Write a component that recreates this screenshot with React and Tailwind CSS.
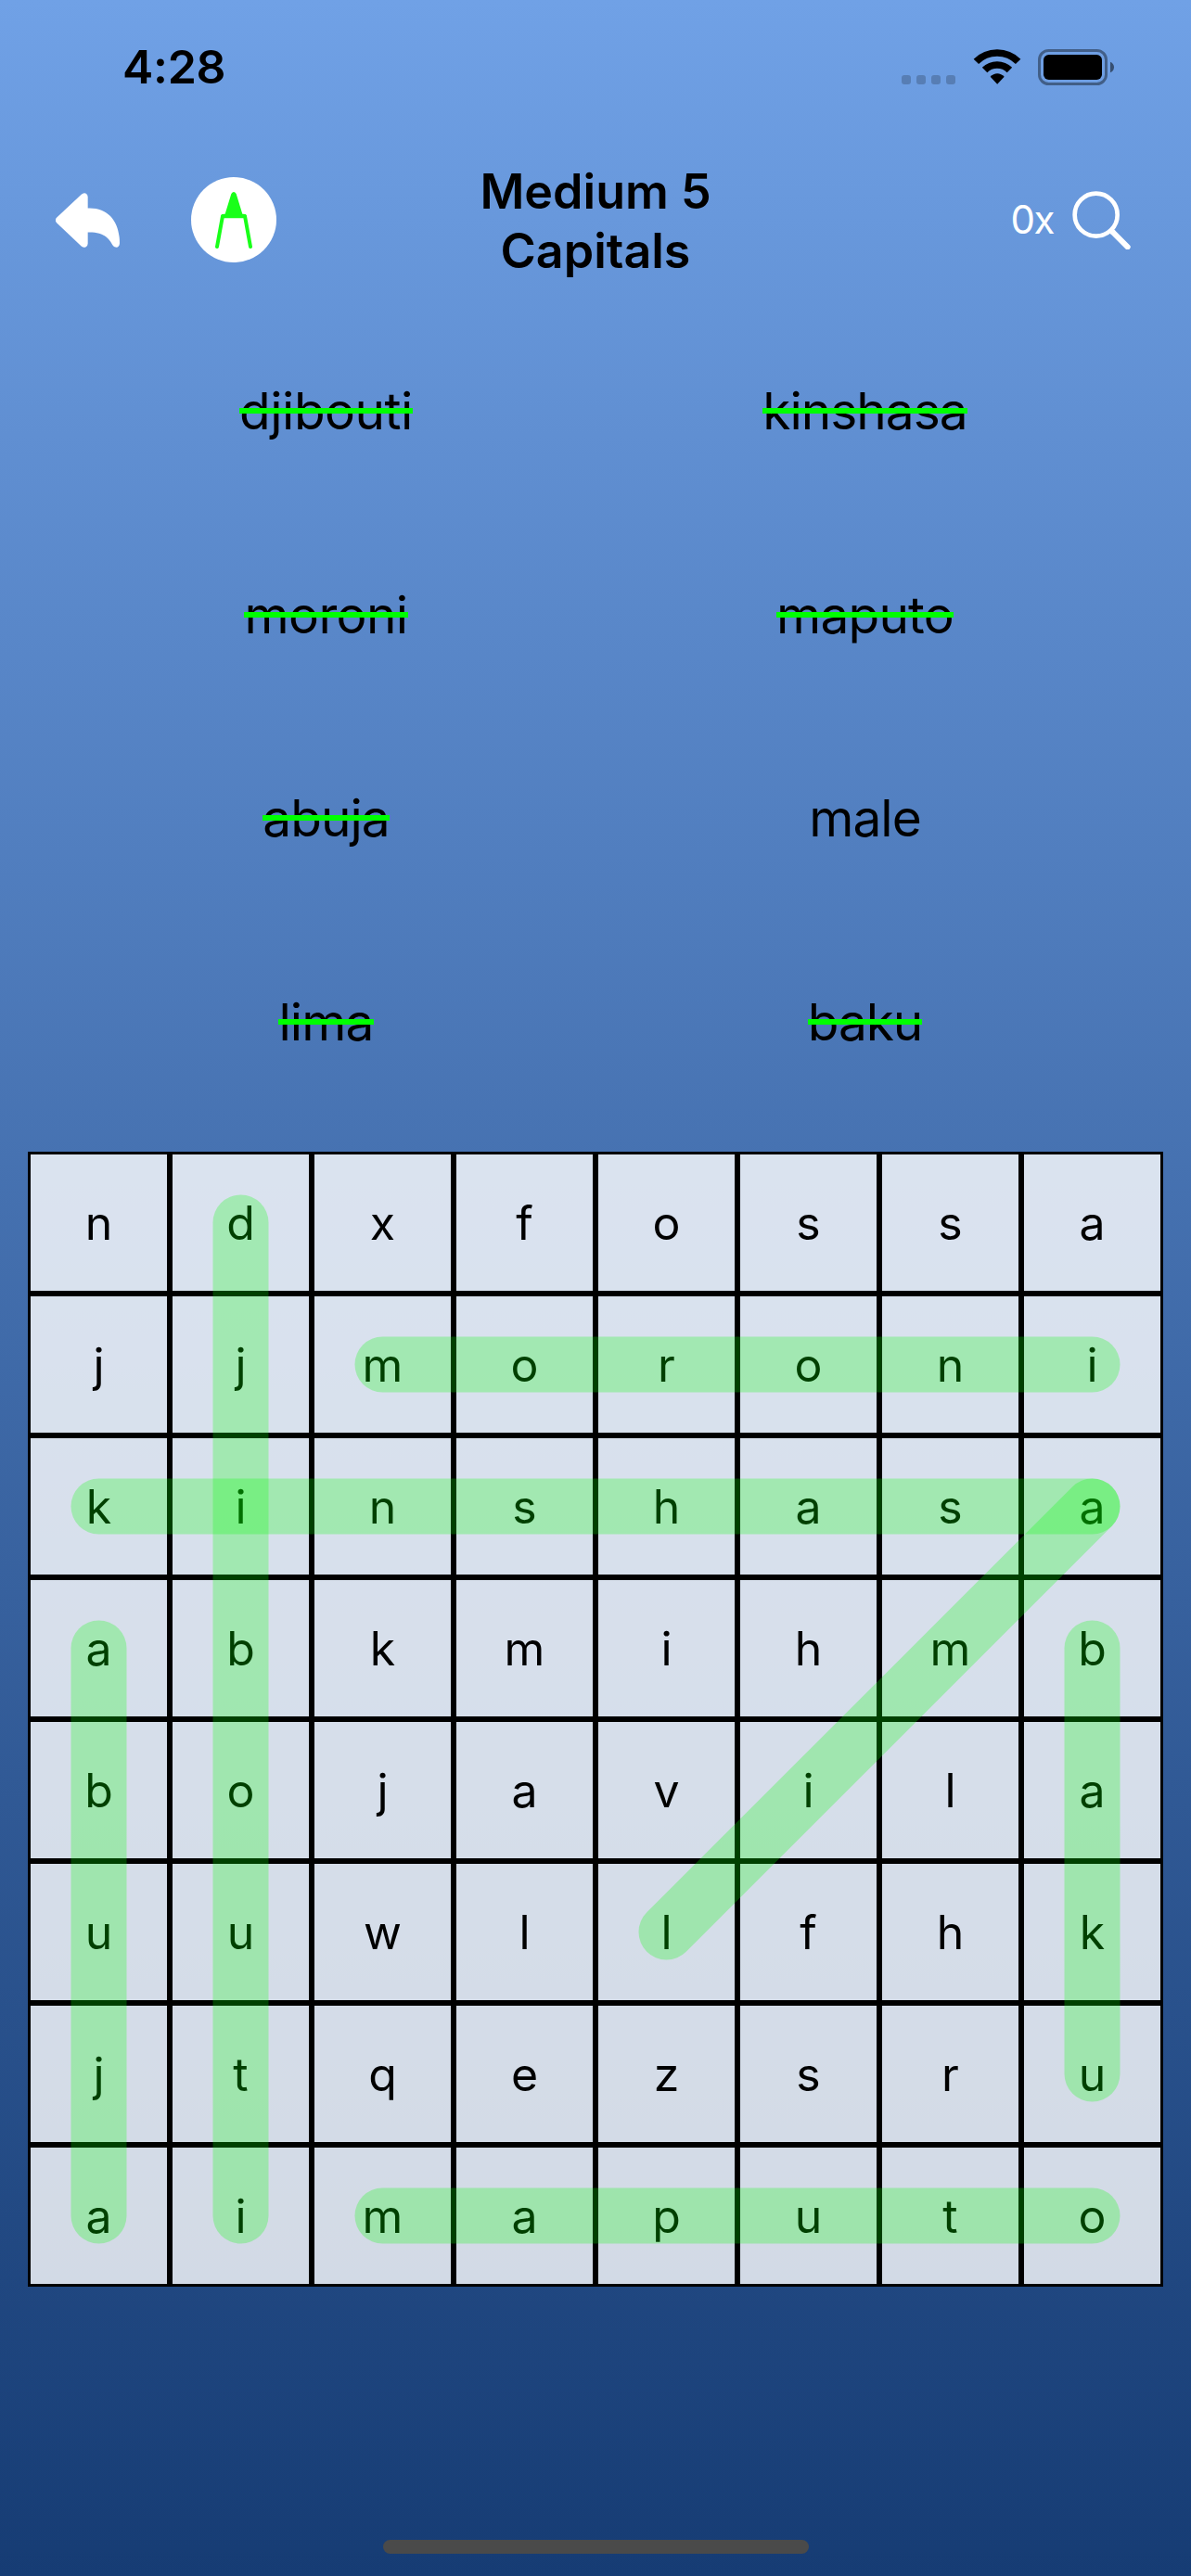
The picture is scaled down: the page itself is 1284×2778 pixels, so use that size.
const words = [
  { text: "djibouti", found: true, spacing: "tracking-[-0.5px]" },
  { text: "kinshasa", found: true, spacing: "tracking-[-1px]" },
  { text: "moroni", found: true, spacing: "tracking-[-0.6px]" },
  { text: "maputo", found: true, spacing: "tracking-[-0.8px]" },
  { text: "abuja", found: true, spacing: "tracking-[-1px]" },
  { text: "male", found: false, spacing: "tracking-[-1px]" },
  { text: "lima", found: true, spacing: "tracking-[-0.9px]" },
  { text: "baku", found: true, spacing: "tracking-[-1.1px]" },
];

const rows = [
  "ndxfossa",
  "jjmoroni",
  "kinshasa",
  "abkmihmb",
  "bojavila",
  "uuwllfhk",
  "jtqezsru",
  "aimaputo",
];

// Each highlight runs from one cell to another: [column, row, column, row].
const highlights = [
  [1, 0, 1, 7],
  [2, 1, 7, 1],
  [0, 2, 7, 2],
  [0, 3, 0, 7],
  [7, 3, 7, 6],
  [4, 5, 7, 2],
  [2, 7, 7, 7],
];

const CELL = 153;
const center = (index) => index * CELL + CELL / 2;

function StatusBar() {
  return (
    <div className="flex h-[141px] shrink-0 items-start justify-between pl-[132px] pr-[82px] pt-[42px]">
      <div className="text-[50px] leading-[61px] font-semibold tracking-[-0.3px]">4:28</div>
      <div className="flex items-start pt-[11px]">
        <div className="mt-[28px] flex gap-[6px]">
          {[0, 1, 2, 3].map((dot) => (
            <div key={dot} className="size-[10px] rounded-[3px] bg-black/20" />
          ))}
        </div>
        <svg className="ml-[19px] h-[38px] w-[52px]" viewBox="328 100 156 114" fill="none">
          <path d="M338.1 140.1A96 96 0 0 1 473.9 140.1M365.7 167.7A57 57 0 0 1 446.3 167.7" stroke="#000" strokeWidth="23" />
          <path d="M384 189C396 175 417 175 429 189L406.500 213Z" fill="#000" />
        </svg>
        <svg className="ml-[18px] h-[39px] w-[83px]" viewBox="540 98 249 117" fill="none">
          <rect x="544.5" y="102.500" width="216" height="108" rx="30" stroke="#000" strokeOpacity=".4" strokeWidth="9" />
          <rect x="558" y="116" width="189" height="81" rx="17" fill="#000" />
          <path d="M774 139C790 145 790 168 774 174Z" fill="#000" fillOpacity=".5" />
        </svg>
      </div>
    </div>
  );
}

function Header() {
  return (
    <header className="grid h-[192px] shrink-0 grid-cols-3 items-center px-[60px]">
      <div className="flex items-center gap-[77px]">
        <svg className="h-[59px] w-[69px]" viewBox="180 562.500 207 177" fill="#fff">
          <path d="M183 643L263 568Q270 561 277 564Q284 567 284 575V612C350 609 387 655 387 725Q386 738 376 739Q369 739 364 731C345 697 322 689 284 690V727Q284 735 277 738Q270 740 263 735L183 659Q176 651 183 643Z" />
        </svg>
        <div className="flex size-[92px] items-center justify-center rounded-full bg-white">
          <svg className="h-[61px] w-[40px]" viewBox="694 559 120 183" fill="none">
            <path d="M746 565Q754 553 762 565L782 630Q794 629 796 638L786 644H722L712 638Q714 629 726 630Z" fill="#19ff19" />
            <path d="M718 637L700 736M790 637L808 736" stroke="#19ff19" strokeWidth="12" strokeLinecap="round" />
          </svg>
        </div>
      </div>
      <h1 className="pt-[4px] text-center text-[52px] leading-[64px] font-semibold">
        Medium 5<br />Capitals
      </h1>
      <div className="mr-[5px] flex items-center justify-end gap-[20px] text-white">
        <span className="text-[42px] leading-[52px] tracking-[-1.5px]">0x</span>
        <svg className="h-[63px] w-[63px]" viewBox="647 554 189 189" fill="none" stroke="#fff">
          <circle cx="724" cy="631" r="69" strokeWidth="14" />
          <path d="M776 685L826 735" strokeWidth="18" strokeLinecap="round" />
          <path d="M772 681L780 689" strokeWidth="18" />
        </svg>
      </div>
    </header>
  );
}

function WordList() {
  return (
    <ul className="grid h-[879px] shrink-0 grid-cols-2 grid-rows-4 px-[61px]">
      {words.map(({ text, found, spacing }) => (
        <li key={text} className="flex items-center justify-center">
          <span className={`relative text-[55px] leading-[66px] ${spacing}`}>
            {text}
            {found && <span className="absolute inset-x-0 top-[30px] h-[6px] bg-[#00ff00]" />}
          </span>
        </li>
      ))}
    </ul>
  );
}

function Board() {
  return (
    <div className="relative mx-[30px] h-[1224px] w-[1224px] shrink-0">
      <div className="grid grid-cols-8">
        {rows.flatMap((row, y) =>
          [...row].map((letter, x) => (
            <div
              key={`${x}-${y}`}
              className="flex h-[153px] items-center justify-center border-3 border-black bg-white/80 bg-clip-padding text-[50px] leading-[60px]"
            >
              {letter}
            </div>
          ))
        )}
      </div>
      <svg className="pointer-events-none absolute inset-0" viewBox="0 0 1224 1224">
        {highlights.map(([x1, y1, x2, y2]) => (
          <line
            key={`${x1}${y1}${x2}${y2}`}
            x1={center(x1)}
            y1={center(y1)}
            x2={center(x2)}
            y2={center(y2)}
            stroke="#00ff00"
            strokeOpacity=".25"
            strokeWidth="60"
            strokeLinecap="round"
          />
        ))}
      </svg>
    </div>
  );
}

export default function App() {
  return (
    <div className="flex h-[2778px] w-[1284px] flex-col overflow-hidden bg-linear-to-b from-[#70a1e6] to-[#163c74] font-['Inter',sans-serif] text-black">
      <StatusBar />
      <Header />
      <WordList />
      <div className="h-[30px] shrink-0" />
      <Board />
      <div className="mx-auto mt-auto mb-[24px] h-[15px] w-[459px] rounded-full bg-[#4a4a4a]" />
    </div>
  );
}
